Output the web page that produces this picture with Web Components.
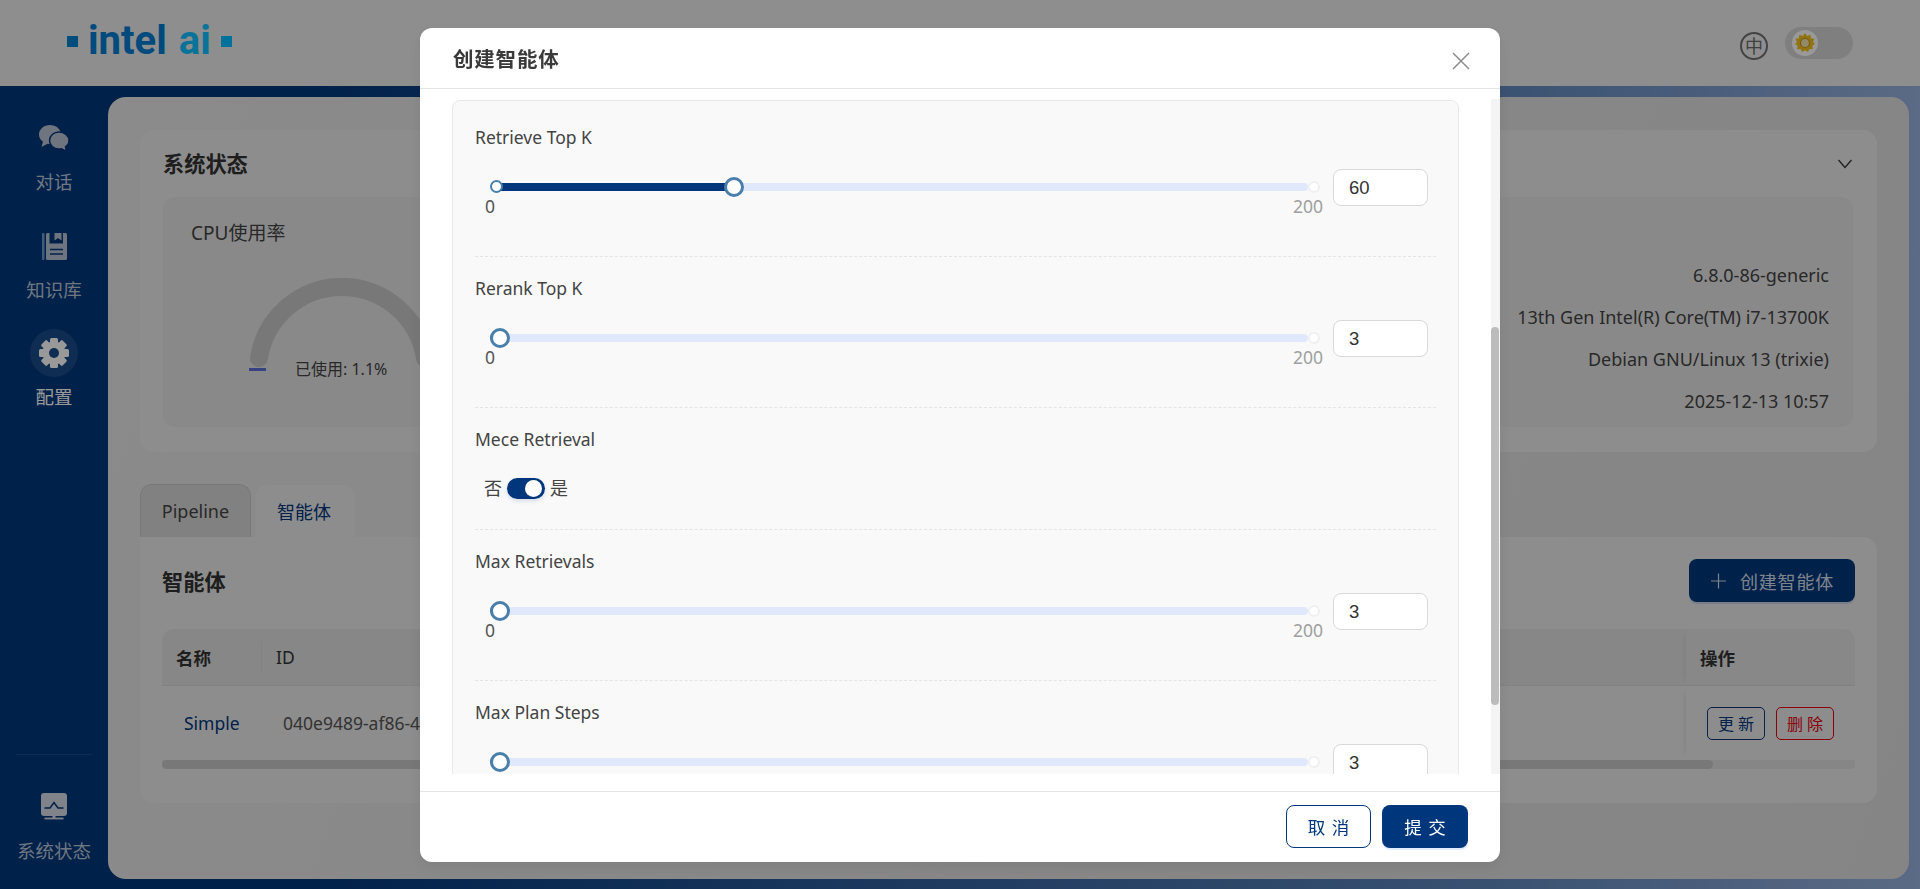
<!DOCTYPE html>
<html lang="zh">
<head>
<meta charset="utf-8">
<title>intel ai</title>
<style>
    html, body {margin: 0; height: 100%; overflow: hidden;}
    body {font-family: "Noto Sans", "Noto Sans CJK SC", sans-serif; color: #333;}
</style>
</head>
<body>
<app-shell>
    <app-header slot="header"></app-header>
    <side-nav slot="nav">
        <nav-item><svg slot="icon" viewBox="0 0 32 32" width="32" height="32"><path fill="#b9c4d4" d="M12 3C6 3 1 7.200 1 12.500c0 3 1.600 5.600 4 7.300L3.500 25l6-3.200c1 .2 1.600.2 2.500.2 6 0 11-4.200 11-9.500S18 3 12 3z"/><path fill="#b9c4d4" stroke="#00377c" stroke-width="1.500" d="M21 10c-5.300 0-9.500 3.800-9.500 8.500s4.200 8.500 9.500 8.500c.9 0 1.700-.1 2.500-.3l5 2.800-1-4.800c2.400-1.500 3.500-3.700 3.500-6.200 0-4.700-4.700-8.500-10-8.500z"/></svg>对话</nav-item>
        <nav-item><svg slot="icon" viewBox="0 0 32 32" width="32" height="32"><rect x="4" y="3" width="2.500" height="27" rx="1" fill="#6d9ad0"/><rect x="8" y="3" width="21" height="27" rx="1.500" fill="#b9c4d4"/><path fill="#00377c" d="M11.500 3v10.500H25V3h-1.500v7.500L20 8l-3.500 2.500V3z"/><path stroke="#00377c" stroke-width="1.500" d="M12 19.500h13M12 24h13"/></svg>知识库</nav-item>
        <nav-item active><svg slot="icon" viewBox="0 0 32 32" width="32" height="32"><g fill="#fff"><circle cx="16" cy="16" r="11.500"/><rect x="12" y="1" width="8" height="30" rx="1.500"/><rect x="12" y="1" width="8" height="30" rx="1.500" transform="rotate(45 16 16)"/><rect x="12" y="1" width="8" height="30" rx="1.500" transform="rotate(90 16 16)"/><rect x="12" y="1" width="8" height="30" rx="1.500" transform="rotate(135 16 16)"/></g><circle cx="16" cy="16" r="5" fill="#1a4b89"/></svg>配置</nav-item>
        <nav-item slot="bottom"><svg slot="icon" viewBox="0 0 32 32" width="32" height="32"><rect x="3" y="4" width="26" height="23" rx="3" fill="#d6dbe4"/><path d="M6.500 19H12l4-5.500 4 5.500h5.500" fill="none" stroke="#00377c" stroke-width="1.500"/><path d="M14.500 27h3v2h-3z" fill="#d6dbe4"/><path d="M6.500 29.500h19" stroke="#d6dbe4" stroke-width="1.800"/></svg>系统状态</nav-item>
    </side-nav>
    <status-panel></status-panel>
    <agent-panel></agent-panel>
</app-shell>

<modal-dialog heading="创建智能体">
    <form-row>
        Retrieve Top K
        <slider-field slot="control" value="60" at="237"></slider-field>
    </form-row>
    <form-row>
        Rerank Top K
        <slider-field slot="control" value="3" at="3"></slider-field>
    </form-row>
    <form-row short>
        Mece Retrieval
        <switch-field slot="control"></switch-field>
    </form-row>
    <form-row>
        Max Retrievals
        <slider-field slot="control" value="3" at="3"></slider-field>
    </form-row>
    <form-row>
        Max Plan Steps
        <slider-field slot="control" value="3" at="3"></slider-field>
    </form-row>
</modal-dialog>

<script>
// every element is only markup + styles, so one helper covers most of them
const define = (name, css, html) => customElements.define(name, class extends HTMLElement {
    constructor() {
        super();
        this.$root = this.attachShadow({ mode: 'open' });
        this.$root.innerHTML = `<style>${css}</style>${typeof html == 'function' ? html(this) : html}`;
    }
});

define('app-shell', `
    :host {display: flex; flex-direction: column; height: 889px;}
    .body {flex: 1; display: flex; min-height: 0; background: linear-gradient(to right, #00377c 0, #00377c 300px, #6189be 1500px, #98b2de 1920px);}
    nav {width: 108px; flex: none;}
    main {flex: 1; margin: 11px 11px 10px 0; padding: 33px 32px 0; border-radius: 18px;
        background: linear-gradient(110deg, #e8e8e8, #dedede);}
`, `
    <slot name="header"></slot>
    <div class="body">
        <nav><slot name="nav"></slot></nav>
        <main><slot></slot></main>
    </div>
`);

define('app-header', `
    :host {display: flex; align-items: center; height: 86px; background: #ededed; padding: 0 67px; box-sizing: border-box;}
    .logo {display: flex; align-items: center; gap: 10px; font: 700 40px/1 Roboto, sans-serif; margin-top: -5px;}
    .sq {width: 11px; height: 11px; background: #0082d0; margin-top: 2px;}
    .intel {color: #007dd0;}
    .ai {color: #12c0ff; margin-left: 2px;}
    .sq.b {background: #00bfff;}
    .end {margin-left: auto; display: flex; align-items: center; gap: 17px;}
    .lang {width: 28px; height: 28px; box-sizing: border-box; border: 2px solid #707070; border-radius: 50%; display: grid; place-items: center;
        font-size: 18px; line-height: 1; color: #6c6c6c; margin-top: 6px;}
    .theme {width: 68px; height: 32px; border-radius: 16px; background: #d4d4d6; display: flex; align-items: center; padding-left: 7px; box-sizing: border-box;}
    .knob {width: 26px; height: 26px; border-radius: 50%; background: #fff; display: grid; place-items: center;}
`, `
    <div class="logo"><i class="sq"></i><span class="intel">intel</span><span class="ai">ai</span><i class="sq b"></i></div>
    <div class="end">
        <span class="lang">中</span>
        <span class="theme"><span class="knob">
            <svg viewBox="0 0 20 20" width="20" height="20"><path fill="#f2c21a" d="M10 0l2.200 3 3.300-1.200.4 3.500 3.500.5L18 9l2 2-2.700 1.700.6 3.500-3.500-.1L13 19l-3-1.800L7 19l-1.400-2.900-3.500.1.600-3.500L0 11l2-2-1.600-3.200 3.500-.5.400-3.500L7.800 3z"/><circle cx="10" cy="10" r="4.500" fill="#f6e7ad" stroke="#c99a12" stroke-width="1.200"/></svg>
        </span></span>
    </div>
`);

define('side-nav', `
    :host {display: flex; flex-direction: column; height: 803px; background: #00377c;}
    .top {padding-top: 28px; display: flex; flex-direction: column; gap: 25.500px;}
    .bottom {margin-top: auto; margin-left: 16px; margin-right: 16px; border-top: 1px solid #1a4b89; padding-top: 26px; height: 135px; box-sizing: border-box;}
    ::slotted([slot=bottom]) {margin: 0 -16px;}
`, `
    <div class="top"><slot></slot></div>
    <div class="bottom"><slot name="bottom"></slot></div>
`);

define('nav-item', `
    :host {display: flex; flex-direction: column; align-items: center; font-size: 18.500px; line-height: 28px; color: #bac6d8;}
    :host([active]) {color: #fff;}
    .icon {width: 48px; height: 48px; border-radius: 50%; display: grid; place-items: center; margin-bottom: 6px;}
    :host([slot=bottom]) .icon {margin-bottom: 8px;}
    :host([active]) .icon {background: #1a4b89;}
`, `<div class="icon"><slot name="icon"></slot></div><slot></slot>`);

define('status-panel', `
    :host {display: block; background: #ebebeb; border-radius: 14px; padding: 22px 24px 25px 23px;}
    .head {display: flex; justify-content: space-between; align-items: center; height: 24px; margin-bottom: 21px;}
    h2 {margin: 0; font-size: 21.200px; line-height: 24px; font-weight: 700; color: #333;}
    .card {display: flex; justify-content: space-between; height: 230px; background: #e5e5e5; border-radius: 12px; font-size: 18px; color: #444;}
    .cpu {padding: 24px 0 0 28px;}
    .cpu p {margin: 0 0 33px; font-size: 19px; line-height: 24px;}
    .gauge {position: relative; width: 186px; height: 100px; margin-left: 58px;}
    .gauge span {position: absolute; left: 46px; top: 80px; font-size: 16px; line-height: 22px; white-space: nowrap;}
    .info {align-self: flex-end; text-align: right; line-height: 42px; padding: 0 24px 5px 0;}
`, `
    <div class="head">
        <h2>系统状态</h2>
        <svg viewBox="0 0 16 10" width="16" height="10"><path d="M1.500 1L8 8.500 14.500 1" fill="none" stroke="#333" stroke-width="1.300"/></svg>
    </div>
    <div class="card">
        <div class="cpu">
            <p>CPU使用率</p>
            <div class="gauge">
                <svg viewBox="0 0 186 100" width="186" height="100">
                    <path d="M10 80 A84 84 0 0 1 176 80" fill="none" stroke="#c8c8c8" stroke-width="18" stroke-linecap="round"/>
                    <rect x="0" y="90" width="17" height="3" fill="#5b6fdc"/>
                </svg>
                <span>已使用: 1.1%</span>
            </div>
        </div>
        <div class="info">
            <div>6.8.0-86-generic</div>
            <div>13th Gen Intel(R) Core(TM) i7-13700K</div>
            <div>Debian GNU/Linux 13 (trixie)</div>
            <div>2025-12-13 10:57</div>
        </div>
    </div>
`);

define('agent-panel', `
    :host {display: block; margin-top: 32px;}
    .tabs {display: flex; gap: 4px; align-items: flex-end; height: 53px; font-size: 18px;}
    .tab {height: 52px; display: grid; place-items: center; border-radius: 12px 12px 0 0; box-sizing: border-box;}
    .tab.off {width: 111px; height: 53px; background: #d8d8d8; border: 1px solid #c8c8c8; border-bottom: 0; color: #444;}
    .tab.on {width: 100px; padding-right: 2px; background: #ebebeb; color: #00377c;}
    .box {background: #ebebeb; border-radius: 0 14px 14px 14px; height: 266px; padding: 21px 22px 0; box-sizing: border-box;}
    .head {display: flex; justify-content: space-between; align-items: center; height: 44px; margin-bottom: 27px;}
    h2 {margin: 0; font-size: 21.200px; font-weight: 700; color: #333;}
    .add {display: flex; align-items: center; gap: 14px; height: 43px; padding: 0 21px 0 22px; width: 166px; box-sizing: border-box; background: #00377c; color: #d4dcea;
        border-radius: 8px; font-size: 18px; letter-spacing: .8px; box-shadow: 0 2px 0 rgba(5,80,200,.16); white-space: nowrap; margin-top: 1px;}
`, `
    <div class="tabs"><div class="tab off">Pipeline</div><div class="tab on">智能体</div></div>
    <div class="box">
        <div class="head">
            <h2>智能体</h2>
            <div class="add"><svg viewBox="0 0 16 16" width="16" height="16"><path d="M8 0v16M0 8h16" stroke="#d4dcea" stroke-width="1.300"/></svg>创建智能体</div>
        </div>
        <agent-table></agent-table>
    </div>
`);

define('agent-table', `
    :host {display: block; font-size: 17.500px;}
    .row {display: grid; grid-template-columns: 100px 1fr 169px;}
    .th {height: 57px; background: #e1e1e1; border-bottom: 1px solid #d8d8d8; box-sizing: border-box; display: flex; align-items: center; padding-left: 14px;
        font-weight: 700; color: #333; font-size: 17.500px; position: relative;}
    .th.id {font-weight: 400;}
    .th:first-child {border-radius: 12px 0 0 0;}
    .th:first-child::after {content: ''; position: absolute; right: 0; top: 13px; bottom: 13px; width: 1px; background: #d8d8d8;}
    .th:last-child {border-radius: 0 12px 0 0; background: #e3e3e3;}
    .td {height: 74px; display: flex; align-items: center; color: #555; padding-left: 21px;}
    .td.name {padding-left: 22px; color: #00377c;}
    .fixed {box-shadow: -6px 0 6px -6px rgba(0,0,0,.1); gap: 11px;}
    .th:last-child {box-shadow: -6px 0 6px -6px rgba(0,0,0,.08);}
    .btn {width: 58px; height: 33px; box-sizing: border-box; border: 1px solid #00377c; color: #00377c; border-radius: 5px; display: grid; place-items: center; font-size: 16px;}
    .btn.del {border-color: #e4000f; color: #e4000f;}
    .bar {height: 9px; background: #e0e0e0; border-radius: 0 0 4px 4px;}
    .bar i {display: block; width: 1551px; height: 9px; background: #c8c8c8; border-radius: 5px;}
`, `
    <div class="row">
        <div class="th">名称</div><div class="th id">ID</div><div class="th">操作</div>
    </div>
    <div class="row">
        <div class="td name">Simple</div>
        <div class="td">040e9489-af86-4</div>
        <div class="td fixed"><span class="btn">更 新</span><span class="btn del">删 除</span></div>
    </div>
    <div class="bar"><i></i></div>
`);

define('modal-dialog', `
    :host {position: fixed; inset: 0; background: rgba(0,0,0,.4); z-index: 10;}
    .dlg {position: absolute; left: 420px; top: 28px; width: 1080px; height: 834px; background: #fff; border-radius: 12px; display: flex; flex-direction: column;
        overflow: hidden; box-shadow: 0 6px 16px rgba(0,0,0,.08);}
    header {height: 60px; flex: none; display: flex; align-items: center; justify-content: space-between; padding: 0 33px; border-bottom: 1px solid #e4e4e8;}
    h1 {margin: 0; font-size: 20.500px; font-weight: 700; color: #3a3a3a; letter-spacing: .8px;}
    .body {height: 685px; flex: none; display: flex; min-height: 0;}
    .scroll {flex: 1; overflow: hidden; padding: 11px 32px 0;}
    .card {width: 1007px; box-sizing: border-box; background: #f9f9f9; border: 1px solid #e8e8ec; border-radius: 8px; padding: 5px 22px 0;}
    .track {width: 9px; flex: none; margin-top: 10px; background: #f4f4f4; position: relative;}
    .thumb {position: absolute; left: 0; top: 228px; width: 8px; height: 378px; background: #bcbcbc; border-radius: 4px;}
    footer {flex: 1; margin-top: 17px; border-top: 1px solid #e4e4e8; display: flex; justify-content: flex-end; align-items: flex-start; gap: 11px; padding: 13px 32px 0;}
    .btn {height: 43px; box-sizing: border-box; border-radius: 8px; display: grid; place-items: center; font-size: 17.500px; word-spacing: 2px;}
    .cancel {width: 85px; border: 1px solid #00377c; color: #00377c;}
    .ok {width: 86px; background: #00377c; color: #fff; box-shadow: 0 2px 0 rgba(5,100,255,.12);}
`, el => `
    <div class="dlg">
        <header>
            <h1>${el.getAttribute('heading')}</h1>
            <svg viewBox="0 0 18 18" width="18" height="18" style="margin:6px -3px 0 0"><path d="M1 1l16 16M17 1L1 17" stroke="#8c8c8c" stroke-width="1.500"/></svg>
        </header>
        <div class="body">
            <div class="scroll"><div class="card"><slot></slot></div></div>
            <div class="track"><div class="thumb"></div></div>
        </div>
        <footer>
            <div class="btn cancel">取 消</div>
            <div class="btn ok">提 交</div>
        </footer>
    </div>
`);

define('form-row', `
    :host {display: block; padding: 19px 0 50px; font-size: 17.500px; line-height: 24px; color: #444; border-bottom: 1px dashed #e4e4e4; width: 961px;}
    :host([short]) {padding-bottom: 24px;}
    :host(:last-child) {border-bottom: 0;}
    .ctl {margin-top: 20px;}
`, `<slot></slot><div class="ctl"><slot name="control"></slot></div>`);

define('slider-field', `
    :host {display: flex; align-items: center; height: 37px; position: relative;}
    .track {position: relative; flex: none; width: 817px; margin: -1px 0 0 22px; height: 8px;}
    .rail {position: absolute; left: 0; right: 6px; top: 0; height: 8px; border-radius: 4px; background: #dfe9fb;}
    .fill {position: absolute; left: 0; top: 0; height: 8px; background: #00377c;}
    .dot {position: absolute; border-radius: 50%; background: #fff; box-sizing: border-box;}
    .start {left: -7px; top: -3px; width: 13px; height: 13px; border: 2px solid #4a7fab;}
    .end {right: -6px; top: -2px; width: 12px; height: 12px; border: 2px solid #f0f0f0;}
    .handle {top: -6px; width: 20px; height: 20px; margin-left: -10px; border: 3px solid #4a7fab;}
    .mark {position: absolute; top: 13px; font-size: 17.500px; line-height: 20px; color: #555; transform: translateX(-50%);}
    .mark.max {color: #a0a0a0;}
    .input {flex: none; width: 95px; height: 37px; box-sizing: border-box; margin-left: 19px; padding-left: 15px; border: 1px solid #d9d9d9; border-radius: 8px;
        background: #fff; font: 18.500px/35px "Liberation Sans", sans-serif; color: #333;}
`, el => {
    const at = +el.getAttribute('at');
    return `
    <div class="track">
        <div class="rail"></div>
        <div class="fill" style="width:${at}px"></div>
        <div class="dot start"></div>
        <div class="dot end"></div>
        <div class="dot handle" style="left:${at}px"></div>
        <span class="mark" style="left:-7px">0</span>
        <span class="mark max" style="left:811px">200</span>
    </div>
    <div class="input">${el.getAttribute('value')}</div>`;
});

define('switch-field', `
    :host {display: flex; align-items: center; height: 34px; padding-left: 9px; gap: 5px; font-size: 18px; color: #444;}
    .sw {width: 38px; height: 21px; border-radius: 11px; background: #00377c; position: relative; box-shadow: 0 2px 4px rgba(0,55,124,.15);}
    .sw i {position: absolute; right: 3px; top: 2px; width: 17px; height: 17px; border-radius: 50%; background: #fff;}
`, `<span>否</span><span class="sw"><i></i></span><span>是</span>`);
</script>
</body>
</html>
